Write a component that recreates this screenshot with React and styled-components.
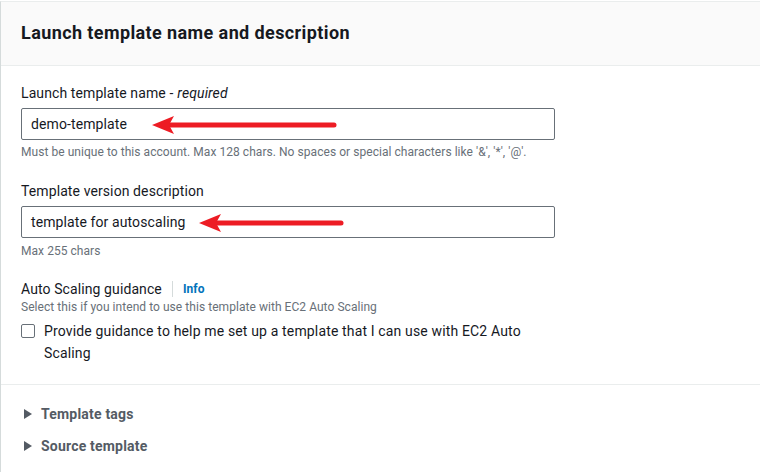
import React from 'react'
import styled, { createGlobalStyle } from 'styled-components'

const GlobalStyle = createGlobalStyle`
  html, body {
    margin: 0;
    padding: 0;
    background: #ffffff;
    font-family: Roboto, "Liberation Sans", sans-serif;
    color: #16191f;
  }
`

const Panel = styled.div`
  width: 760px;
  height: 472px;
  box-sizing: border-box;
  border-top: 1px solid #eaeded;
  border-left: 1px solid #d5dbdb;
  margin-top: 1px;
  overflow: hidden;
  background: #ffffff;
`

const Header = styled.div`
  height: 64px;
  box-sizing: border-box;
  background: #fafafa;
  border-bottom: 1px solid #eaeded;
  display: flex;
  align-items: center;
  padding-left: 20px;
`

const Title = styled.h2`
  margin: 0 0 2px;
  font-size: 18px;
  font-weight: 700;
  letter-spacing: 0.4px;
  color: #16191f;
`

const Body = styled.div`
  padding: 17px 20px 0;
  display: flex;
  flex-direction: column;
  width: 534px;
  letter-spacing: 0.1px;
`

const Field = styled.div`
  display: flex;
  flex-direction: column;
  margin-bottom: ${p => p.gap || 0}px;
`

const Label = styled.div`
  font-size: 14px;
  line-height: 20px;
  color: #16191f;
  margin-bottom: ${p => p.bottom ?? 5}px;
  display: flex;
  align-items: center;

  em {
    margin-left: 4px;
  }
`

const InputWrap = styled.div`
  position: relative;
`

const Input = styled.div`
  height: 32px;
  box-sizing: border-box;
  border: 1px solid #687078;
  border-radius: 2px;
  padding: 0 9px;
  display: flex;
  align-items: center;
  font-size: 14px;
  color: #16191f;
`

const Arrow = styled.svg`
  position: absolute;
  top: 7px;
  left: ${p => p.left}px;
`

const Hint = styled.div`
  font-size: 12px;
  line-height: 16px;
  letter-spacing: 0.05px;
  color: #687078;
  margin-top: ${p => p.top ?? 5}px;
`

const Divider = styled.span`
  width: 1px;
  height: 16px;
  background: #d5dbdb;
  margin: 0 10px;
`

const InfoLink = styled.span`
  font-size: 12px;
  font-weight: 700;
  color: #0073bb;
`

const CheckRow = styled.label`
  display: flex;
  align-items: flex-start;
  margin-top: 5px;
  font-size: 14px;
  line-height: 22px;
  letter-spacing: 0.15px;
  color: #16191f;
`

const Box = styled.span`
  flex: none;
  width: 12px;
  height: 12px;
  border: 1px solid #687078;
  border-radius: 2px;
  margin: 4px 9px 0 0;
`

const Rule = styled.div`
  height: 1px;
  background: #eaeded;
  margin-top: 20px;
`

const Expanders = styled.div`
  padding: 19px 20px 0;
  display: flex;
  flex-direction: column;
  gap: 12px;
`

const Expander = styled.div`
  display: flex;
  align-items: center;
  font-size: 14px;
  font-weight: 700;
  line-height: 20px;
  letter-spacing: 0.2px;
  color: #545b64;
`

const Caret = styled.span`
  width: 0;
  height: 0;
  border-top: 5px solid transparent;
  border-bottom: 5px solid transparent;
  border-left: 8px solid #545b64;
  margin: 0 9px 0 3px;
`

const RedArrow = ({ left, width }) => (
  <Arrow left={left} width={width} height={20} viewBox={`0 0 ${width} 20`}>
    <path d={`M${width - 3} 10 L18 10`} stroke="#ed1c24" strokeWidth="5" strokeLinecap="round" />
    <path d="M0 10 L22 1 L17 10 L22 19 Z" fill="#ed1c24" />
  </Arrow>
)

export default function App() {
  return (
    <>
      <GlobalStyle />
      <Panel>
        <Header>
          <Title>Launch template name and description</Title>
        </Header>
        <Body>
          <Field gap={21}>
            <Label>Launch template name -<em>required</em></Label>
            <InputWrap>
              <Input>demo-template</Input>
              <RedArrow left={131} width={185} />
            </InputWrap>
            <Hint top={4}>Must be unique to this account. Max 128 chars. No spaces or special characters like '&amp;', '*', '@'.</Hint>
          </Field>
          <Field gap={20}>
            <Label>Template version description</Label>
            <InputWrap>
              <Input>template for autoscaling</Input>
              <RedArrow left={178} width={145} />
            </InputWrap>
            <Hint>Max 255 chars</Hint>
          </Field>
          <Field>
            <Label bottom={4}>Auto Scaling guidance<Divider /><InfoLink>Info</InfoLink></Label>
            <Hint top={-4}>Select this if you intend to use this template with EC2 Auto Scaling</Hint>
            <CheckRow>
              <Box />
              <span>Provide guidance to help me set up a template that I can use with EC2 Auto Scaling</span>
            </CheckRow>
          </Field>
        </Body>
        <Rule />
        <Expanders>
          <Expander><Caret />Template tags</Expander>
          <Expander><Caret />Source template</Expander>
        </Expanders>
      </Panel>
    </>
  )
}
